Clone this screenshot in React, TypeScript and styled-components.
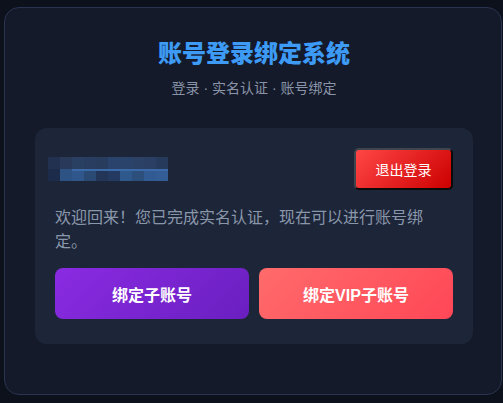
import React from 'react'
import styled, { createGlobalStyle } from 'styled-components'

const GlobalStyle = createGlobalStyle`
  html, body {
    margin: 0;
    padding: 0;
    background: #0d111c;
  }
  body {
    font-family: "Liberation Sans", "Noto Sans CJK SC", sans-serif;
  }
  * { box-sizing: border-box; }
`

const Page = styled.div`
  padding: 7px 1px 0 4px;
`

const Card = styled.div`
  height: 388px;
  background: #141a29;
  border: 1px solid #2a3450;
  border-radius: 15px;
  padding: 30px 28px 30px 30px;
`

const Header = styled.div`
  text-align: center;
  margin-bottom: 29px;
`

const Title = styled.h1`
  margin: 0;
  font-size: 24px;
  line-height: 32px;
  font-weight: 800;
  color: #3d9bf6;
`

const Subtitle = styled.p`
  margin: 8px 0 0;
  font-size: 14px;
  line-height: 21px;
  color: #8a94a8;
`

const Panel = styled.div`
  background: #1d2538;
  border-radius: 12px;
  padding: 20px 20px 25px;
`

const TopRow = styled.div`
  display: flex;
  align-items: center;
  justify-content: space-between;
`

const Mosaic = styled.div`
  display: grid;
  grid-template-columns: repeat(10, 12px);
  grid-template-rows: 12px 12px;
  margin-left: -7px;
`

const Tile = styled.div<{ $c: string; $line?: boolean }>`
  background: ${(p) => p.$c};
  box-shadow: ${(p) => (p.$line ? 'inset 0 2px 0 #3b6aa8' : 'none')};
`

const LogoutButton = styled.button`
  width: 99px;
  height: 42px;
  border: 2px solid;
  border-color: #40444d #0b0b0b #0b0b0b #40444d;
  border-radius: 5px;
  background: linear-gradient(135deg, #ff4646, #cc0000);
  color: #ffffff;
  font-family: inherit;
  font-size: 14px;
  cursor: pointer;
`

const Welcome = styled.p`
  margin: 16px 0 0;
  font-size: 16px;
  line-height: 24px;
  color: #8a97ab;
`

const Actions = styled.div`
  display: grid;
  grid-template-columns: 1fr 1fr;
  gap: 10px;
  margin-top: 14px;
`

const BindButton = styled.button<{ $from: string; $to: string }>`
  height: 51px;
  border: none;
  border-radius: 8px;
  background: linear-gradient(135deg, ${(p) => p.$from}, ${(p) => p.$to});
  color: #ffffff;
  font-family: inherit;
  font-size: 16px;
  font-weight: 700;
  cursor: pointer;
`

const row1 = ['#22314f', '#28395a', '#2a4063', '#283d60', '#283c5e', '#2a436c', '#2a436b', '#2b4166', '#2a3f63', '#263a5c']
const row2 = ['#1d2b4a', '#2d5385', '#30578b', '#2b4a73', '#233657', '#253a60', '#2f588c', '#2d4f7c', '#315b92', '#335d94']

const App = () => {
  return (
    <Page>
      <GlobalStyle />
      <Card>
        <Header>
          <Title>账号登录绑定系统</Title>
          <Subtitle>登录 · 实名认证 · 账号绑定</Subtitle>
        </Header>
        <Panel>
          <TopRow>
            <Mosaic>
              {row1.map((c, i) => (
                <Tile key={'a' + i} $c={c} />
              ))}
              {row2.map((c, i) => (
                <Tile key={'b' + i} $c={c} $line={i >= 2} />
              ))}
            </Mosaic>
            <LogoutButton>退出登录</LogoutButton>
          </TopRow>
          <Welcome>欢迎回来！您已完成实名认证，现在可以进行账号绑定。</Welcome>
          <Actions>
            <BindButton $from="#8a2be2" $to="#6a1fc0">绑定子账号</BindButton>
            <BindButton $from="#ff6b6b" $to="#ff4757">绑定VIP子账号</BindButton>
          </Actions>
        </Panel>
      </Card>
    </Page>
  )
}

export default App
